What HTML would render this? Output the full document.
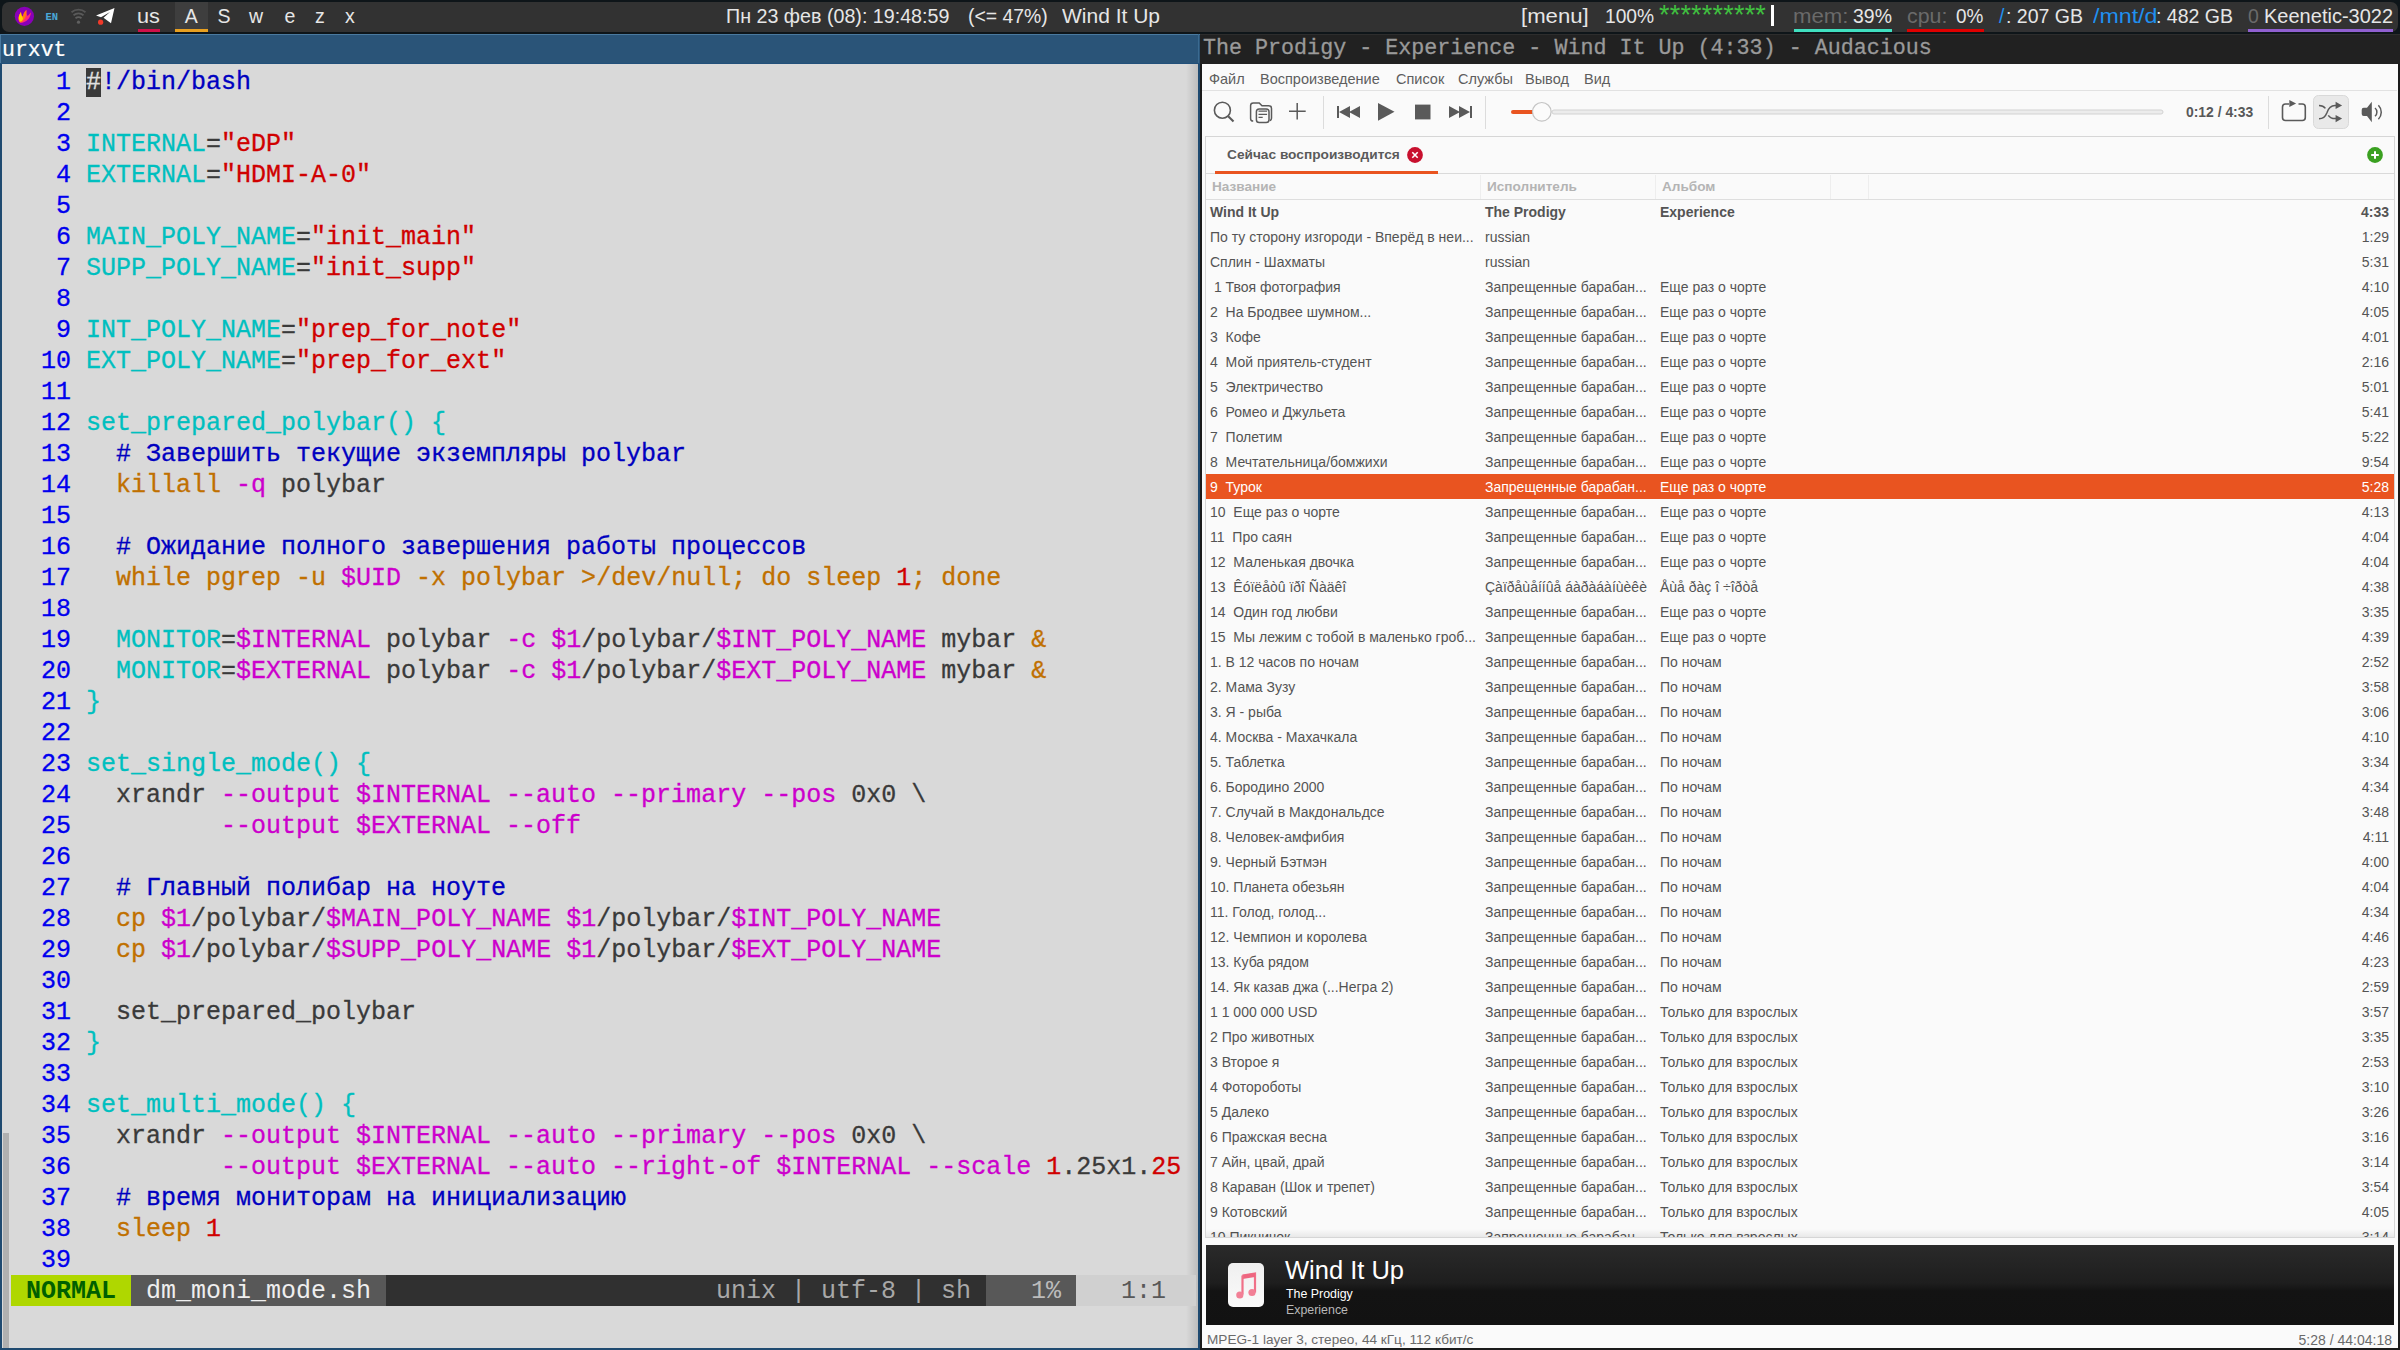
<!DOCTYPE html>
<html><head><meta charset="utf-8">
<style>
*{margin:0;padding:0;box-sizing:border-box}
html,body{width:2400px;height:1350px;overflow:hidden;background:#0e1519;font-family:"Liberation Sans",sans-serif}
.a{position:absolute}
.t{position:absolute;white-space:pre;line-height:1}
.mono{font-family:"Liberation Mono",monospace}
#bar{left:2px;top:2px;width:2396px;height:30px;background:#323232;border-radius:7px}
.bt{position:absolute;white-space:pre;font-size:19.5px;color:#e6e6e6;top:3.5px;line-height:24px}
#term{left:0;top:34px;width:1200px;height:1316px;background:#2a5478}
#termc{left:2px;top:64px;width:1196px;height:1284px;background:#d9d9d9}
#code{position:absolute;left:11px;top:67px;font-family:"Liberation Mono",monospace;font-size:25px;line-height:31px;white-space:pre;color:#3a3a3a;-webkit-text-stroke:0.3px currentColor}
.n{color:#0000ee}.c{color:#0000c0}.v{color:#00bfbf}.s{color:#d00000}.k{color:#c07000}.m{color:#cc00cc}
#aud{left:1200px;top:34px;width:1200px;height:1316px;background:#1a1a1a}
#audt{left:1200px;top:34px;width:1200px;height:30px;background:#212121;border-top:1px solid #2d2d2d}
#audc{left:1202px;top:64px;width:1196px;height:1284px;background:#fafafa}
.row{position:absolute;left:0;width:1188px;height:25px;font-size:14px;line-height:27px;white-space:pre}
.row span{position:absolute;top:0}
.row .dur{right:5px}
</style></head><body>
<div class="a" id="bar"></div>
<div class="a" id="term"></div>
<div class="a" id="termc"></div>
<div class="a" style="left:0px;top:34px;width:1200px;height:1px;background:#4a7aa0;"></div>
<div class="a" style="left:0px;top:34px;width:1px;height:29px;background:#4a7aa0;"></div>
<div class="a" style="left:1198px;top:34px;width:1px;height:29px;background:#3a6a90;"></div>
<div class="a" style="left:0px;top:63px;width:1200px;height:1px;background:#22507a;"></div>
<div class="a" style="left:0px;top:64px;width:2px;height:1286px;background:#1f4a70;"></div>
<div class="a" style="left:1198px;top:64px;width:2px;height:1286px;background:#1f4a70;"></div>
<div class="a" style="left:0px;top:1348px;width:1200px;height:2px;background:#1f4a70;"></div>
<div class="a" style="left:1186px;top:64px;width:12px;height:1284px;background:linear-gradient(to right,rgba(0,0,0,0),rgba(0,0,0,0.13))"></div>
<div class="t mono" style="left:2px;top:38px;font-size:21.5px;line-height:24px;color:#fff;-webkit-text-stroke:0.2px currentColor">urxvt</div>
<div id="code"><span class="n">   1</span> <span style="background:#3a3a3a;color:#e0e0e0">#</span><span class="c">!/bin/bash</span>
<span class="n">   2</span> 
<span class="n">   3</span> <span class="v">INTERNAL</span>=<span class="s">&quot;eDP&quot;</span>
<span class="n">   4</span> <span class="v">EXTERNAL</span>=<span class="s">&quot;HDMI-A-0&quot;</span>
<span class="n">   5</span> 
<span class="n">   6</span> <span class="v">MAIN_POLY_NAME</span>=<span class="s">&quot;init_main&quot;</span>
<span class="n">   7</span> <span class="v">SUPP_POLY_NAME</span>=<span class="s">&quot;init_supp&quot;</span>
<span class="n">   8</span> 
<span class="n">   9</span> <span class="v">INT_POLY_NAME</span>=<span class="s">&quot;prep_for_note&quot;</span>
<span class="n">  10</span> <span class="v">EXT_POLY_NAME</span>=<span class="s">&quot;prep_for_ext&quot;</span>
<span class="n">  11</span> 
<span class="n">  12</span> <span class="v">set_prepared_polybar() {</span>
<span class="n">  13</span>   <span class="c"># Завершить текущие экземпляры polybar</span>
<span class="n">  14</span>   <span class="k">killall</span> <span class="m">-q</span> polybar
<span class="n">  15</span> 
<span class="n">  16</span>   <span class="c"># Ожидание полного завершения работы процессов</span>
<span class="n">  17</span>   <span class="k">while pgrep -u </span><span class="m">$UID</span><span class="k"> -x polybar &gt;/dev/null; do sleep </span><span class="s">1</span><span class="k">; done</span>
<span class="n">  18</span> 
<span class="n">  19</span>   <span class="v">MONITOR</span>=<span class="m">$INTERNAL</span> polybar <span class="m">-c</span> <span class="m">$1</span>/polybar/<span class="m">$INT_POLY_NAME</span> mybar <span class="k">&amp;</span>
<span class="n">  20</span>   <span class="v">MONITOR</span>=<span class="m">$EXTERNAL</span> polybar <span class="m">-c</span> <span class="m">$1</span>/polybar/<span class="m">$EXT_POLY_NAME</span> mybar <span class="k">&amp;</span>
<span class="n">  21</span> <span class="v">}</span>
<span class="n">  22</span> 
<span class="n">  23</span> <span class="v">set_single_mode() {</span>
<span class="n">  24</span>   xrandr <span class="m">--output $INTERNAL --auto --primary --pos</span> 0x0 \
<span class="n">  25</span>          <span class="m">--output $EXTERNAL --off</span>
<span class="n">  26</span> 
<span class="n">  27</span>   <span class="c"># Главный полибар на ноуте</span>
<span class="n">  28</span>   <span class="k">cp</span> <span class="m">$1</span>/polybar/<span class="m">$MAIN_POLY_NAME</span> <span class="m">$1</span>/polybar/<span class="m">$INT_POLY_NAME</span>
<span class="n">  29</span>   <span class="k">cp</span> <span class="m">$1</span>/polybar/<span class="m">$SUPP_POLY_NAME</span> <span class="m">$1</span>/polybar/<span class="m">$EXT_POLY_NAME</span>
<span class="n">  30</span> 
<span class="n">  31</span>   set_prepared_polybar
<span class="n">  32</span> <span class="v">}</span>
<span class="n">  33</span> 
<span class="n">  34</span> <span class="v">set_multi_mode() {</span>
<span class="n">  35</span>   xrandr <span class="m">--output $INTERNAL --auto --primary --pos</span> 0x0 \
<span class="n">  36</span>          <span class="m">--output $EXTERNAL --auto --right-of $INTERNAL --scale</span> <span class="s">1</span>.25x1.<span class="s">25</span>
<span class="n">  37</span>   <span class="c"># время мониторам на инициализацию</span>
<span class="n">  38</span>   <span class="k">sleep</span> <span class="s">1</span>
<span class="n">  39</span> </div>
<div class="a" id="aud"></div>
<div class="a" id="audt"></div>
<div class="t mono" style="left:1203px;top:37px;font-size:21.7px;line-height:24px;color:#9a9a9a;-webkit-text-stroke:0.3px currentColor">The Prodigy - Experience - Wind It Up (4:33) - Audacious</div>
<div class="a" id="audc"></div>
<div class="a" style="left:175px;top:2px;width:33px;height:30px;background:#3e3e3e;"></div>
<div class="a" style="left:138px;top:29px;width:22px;height:3px;background:#d0104a;"></div>
<div class="a" style="left:175px;top:29px;width:33px;height:3px;background:#e8a020;"></div>
<div class="bt" style="left:137.29px;color:#e6e6e6;transform:scaleX(1.1105);transform-origin:0 0">us</div>
<div class="bt" style="left:184.80px;color:#e6e6e6;transform:scaleX(1.0000);transform-origin:0 0">A</div>
<div class="bt" style="left:217.60px;color:#e6e6e6;transform:scaleX(1.0000);transform-origin:0 0">S</div>
<div class="bt" style="left:249.00px;color:#e6e6e6;transform:scaleX(1.0000);transform-origin:0 0">w</div>
<div class="bt" style="left:284.50px;color:#e6e6e6;transform:scaleX(1.0000);transform-origin:0 0">e</div>
<div class="bt" style="left:315.00px;color:#e6e6e6;transform:scaleX(1.0000);transform-origin:0 0">z</div>
<div class="bt" style="left:345.00px;color:#e6e6e6;transform:scaleX(1.0000);transform-origin:0 0">x</div>
<div class="bt" style="left:725.99px;color:#e6e6e6;transform:scaleX(1.0091);transform-origin:0 0">Пн 23 фев (08): 19:48:59</div>
<div class="bt" style="left:968.21px;color:#e6e6e6;transform:scaleX(0.9936);transform-origin:0 0">(&lt;= 47%)</div>
<div class="bt" style="left:1062.40px;color:#e6e6e6;transform:scaleX(1.0769);transform-origin:0 0">Wind It Up</div>
<div class="bt" style="left:1520.56px;color:#e6e6e6;transform:scaleX(1.1362);transform-origin:0 0">[menu]</div>
<div class="bt" style="left:1604.71px;color:#e6e6e6;transform:scaleX(0.9854);transform-origin:0 0">100%</div>
<div class="bt" style="left:1793.46px;color:#6a6a6a;transform:scaleX(1.1391);transform-origin:0 0">mem:</div>
<div class="bt" style="left:1852.50px;color:#e6e6e6;transform:scaleX(0.9974);transform-origin:0 0">39%</div>
<div class="bt" style="left:1906.71px;color:#6a6a6a;transform:scaleX(1.0941);transform-origin:0 0">cpu:</div>
<div class="bt" style="left:1955.83px;color:#e6e6e6;transform:scaleX(0.9704);transform-origin:0 0">0%</div>
<div class="bt" style="left:1999.00px;color:#2090f0;transform:scaleX(1.0000);transform-origin:0 0">/</div>
<div class="bt" style="left:2006.00px;color:#e6e6e6;transform:scaleX(1.0000);transform-origin:0 0">: 207 GB</div>
<div class="bt" style="left:2093.00px;color:#2090f0;transform:scaleX(1.1887);transform-origin:0 0">/mnt/d</div>
<div class="bt" style="left:2156.00px;color:#e6e6e6;transform:scaleX(1.0000);transform-origin:0 0">: 482 GB</div>
<div class="bt" style="left:2248.00px;color:#6a6a6a;transform:scaleX(1.0000);transform-origin:0 0">0</div>
<div class="bt" style="left:2263.67px;color:#e6e6e6;transform:scaleX(1.0266);transform-origin:0 0">Keenetic-3022</div>
<div class="bt" style="left:1659px;color:#40c040;font-size:27px;letter-spacing:0.2px;top:3px">**********</div>
<div class="a" style="left:1771px;top:5px;width:3px;height:21px;background:#ffffff;"></div>
<div class="a" style="left:1794px;top:29px;width:98px;height:3px;background:#40e0c0;"></div>
<div class="a" style="left:1907px;top:29px;width:77px;height:3px;background:#e00000;"></div>
<div class="a" style="left:2248px;top:29px;width:145px;height:3px;background:#9060d0;"></div>
<svg class="a" style="left:0;top:0" width="130" height="34" viewBox="0 0 130 34"><circle cx="24.4" cy="16.3" r="9.6" fill="#8a00b8"/><path d="M19.5 22 C17.5 18 19 15 21 12 C21 15 22 16 23 16.5 C23 14 24.5 11.5 26.5 10 C26 13 27 15 27.5 16 C28.5 15 30 13.5 31 12.5 C30.5 17 28 21 23 22.5 C21.5 23 20.5 23 19.5 22 Z" fill="#ff2a7a"/><path d="M19.5 22 C17.5 18 19 15 21 12 C21 15 22 16 23 16.5 C23 14 24.5 11.5 26.5 10 C26.5 14 26 18 23 21 C21.5 22.5 20.5 22.8 19.5 22 Z" fill="#ff7a10"/><path d="M20 21.5 C18 18 19 15 21 12 C21 15 22 17 23 18 C23 20 21.5 21.5 20 21.5 Z" fill="#ffd000"/><text x="45.5" y="19.5" font-family="Liberation Mono" font-weight="bold" font-size="10.5" fill="#4aa8d8">EN</text><path d="M71.5 12.2 A11 11 0 0 1 85.5 12.2" fill="none" stroke="#555" stroke-width="1.8"/><path d="M73.5 15.2 A8 8 0 0 1 83.5 15.2" fill="none" stroke="#5a5a5a" stroke-width="1.8"/><path d="M75.5 18.3 A5 5 0 0 1 81.5 18.3" fill="none" stroke="#5e5e5e" stroke-width="1.8"/><circle cx="78.5" cy="22.2" r="1.6" fill="#606060"/><path d="M96 15.5 L114.5 8 L111 23.2 L103.5 17.8 L110 12 L101 17.2 Z" fill="#ffffff"/><circle cx="100.6" cy="22.2" r="2.6" fill="#f03a2a"/></svg>
<div class="a mono" style="left:11px;top:1275px;width:120px;height:31px;background:#afd700;color:#005f00;font-size:25px;line-height:33px;white-space:pre;font-weight:bold;"> NORMAL </div>
<div class="a mono" style="left:131px;top:1275px;width:255px;height:31px;background:#585858;color:#eeeeee;font-size:25px;line-height:33px;white-space:pre;"> dm_moni_mode.sh </div>
<div class="a mono" style="left:386px;top:1275px;width:600px;height:31px;background:#303030;color:#a8a8a8;font-size:25px;line-height:33px;white-space:pre;">                      unix | utf-8 | sh </div>
<div class="a mono" style="left:986px;top:1275px;width:90px;height:31px;background:#585858;color:#bcbcbc;font-size:25px;line-height:33px;white-space:pre;">   1% </div>
<div class="a mono" style="left:1076px;top:1275px;width:120px;height:31px;background:#d0d0d0;color:#585858;font-size:25px;line-height:33px;white-space:pre;">   1:1  </div>
<div class="a" style="left:3px;top:1133px;width:6px;height:215px;background:#b0b0b0;"></div>
<div class="a" style="left:1202px;top:90px;width:1195px;height:1px;background:#e2e2e2;"></div>
<div class="t" style="left:1209px;top:72px;font-size:14.5px;color:#5e5e5e;font-weight:normal;">Файл</div>
<div class="t" style="left:1260px;top:72px;font-size:14.5px;color:#5e5e5e;font-weight:normal;">Воспроизведение</div>
<div class="t" style="left:1396px;top:72px;font-size:14.5px;color:#5e5e5e;font-weight:normal;">Список</div>
<div class="t" style="left:1458px;top:72px;font-size:14.5px;color:#5e5e5e;font-weight:normal;">Службы</div>
<div class="t" style="left:1525px;top:72px;font-size:14.5px;color:#5e5e5e;font-weight:normal;">Вывод</div>
<div class="t" style="left:1584px;top:72px;font-size:14.5px;color:#5e5e5e;font-weight:normal;">Вид</div>
<div class="a" style="left:1323px;top:96px;width:1px;height:33px;background:#dcdcdc;"></div>
<div class="a" style="left:1485px;top:96px;width:1px;height:33px;background:#dcdcdc;"></div>
<div class="a" style="left:2268px;top:96px;width:1px;height:33px;background:#dcdcdc;"></div>
<svg class="a" style="left:1202px;top:91px" width="1195" height="45" viewBox="1202 91 1195 45"><circle cx="1222.4" cy="110.2" r="8.0" fill="none" stroke="#5a5a5a" stroke-width="1.6"/><line x1="1228.2" y1="116.2" x2="1233.5" y2="121.5" stroke="#5a5a5a" stroke-width="2.1"/><path d="M1253 121H1253.2A2.6 2.6 0 0 1 1250.6 118.4V105.6A2.7 2.7 0 0 1 1253.3 102.9H1259.2L1262 105.7H1268.8A2.7 2.7 0 0 1 1271.5 108.4V118.2A2.5 2.5 0 0 1 1269.8 120.6" fill="none" stroke="#5a5a5a" stroke-width="1.5"/><rect x="1256.4" y="109" width="12.6" height="13.6" rx="2.8" fill="#fafafa" stroke="#5a5a5a" stroke-width="1.5"/><path d="M1258.5 111.2h8.6M1258.5 114.3h8.6M1258.5 117.3h4.2" stroke="#5a5a5a" stroke-width="1.3"/><path d="M1297.2 103v16.6M1289 111.2h16.7" stroke="#5a5a5a" stroke-width="1.5"/><path d="M1337 106h2v12h-2z M1339 112l11-6v12z M1349 112l11-6v12z" fill="#5a5a5a"/><path d="M1378 103l16.5 8.8l-16.5 9z" fill="#5a5a5a"/><rect x="1415" y="104.6" width="15.5" height="14.8" fill="#5a5a5a"/><path d="M1449 106l11 6l-11 6z M1459 106l11 6l-11 6z M1470 106h2v12h-2z" fill="#5a5a5a"/><rect x="1552" y="110" width="611" height="4" rx="2" fill="#ececec" stroke="#d2d2d2" stroke-width="1"/><rect x="1511" y="110" width="24" height="4" rx="2" fill="#e95420"/><circle cx="1541.8" cy="111.8" r="9.3" fill="#fbfbfb" stroke="#c4c4c4" stroke-width="1.2"/><path d="M2298.5 104h3.8a3 3 0 0 1 3 3v10.5a3 3 0 0 1 -3 3h-16.8a3 3 0 0 1 -3 -3v-10.5a3 3 0 0 1 3 -3h3.5" fill="none" stroke="#5a5a5a" stroke-width="1.6"/><path d="M2289.3 100.1L2296.1 103.6L2289.3 107.1Z" fill="#5a5a5a"/><rect x="2313.5" y="95.5" width="35" height="33" rx="5" fill="#e9e9e9" stroke="#d9d9d9" stroke-width="1"/><path d="M2319 105.6C2322 105.6 2324 106.6 2325.4 108.4 M2319 118.7C2323 118.7 2325.3 117 2326.8 113 C2328.3 108.6 2330.8 105.6 2335 105.6H2337 M2328.3 115.3C2329.8 117.5 2332 118.6 2335 118.6H2337" fill="none" stroke="#5a5a5a" stroke-width="1.5"/><path d="M2335.6 101.8L2342.1 105.4L2335.6 108.9Z M2335.6 115.1L2342.1 118.6L2335.6 122.2Z" fill="#5a5a5a"/><path d="M2363.7 107.8H2367L2371.8 101.8V122.2L2367 116.1H2363.7A2 2 0 0 1 2361.7 114.1V109.8A2 2 0 0 1 2363.7 107.8Z" fill="#5a5a5a"/><path d="M2375 108a5.5 5.5 0 0 1 0 8.3 M2378.4 105.2a10 10 0 0 1 0 14" fill="none" stroke="#5a5a5a" stroke-width="1.5"/></svg>
<div class="t" style="left:2186px;top:106px;font-size:13.9px;color:#585858;font-weight:bold;">0:12 / 4:33</div>
<div class="a" style="left:1205px;top:136px;width:1190px;height:1102px;border:1px solid #d6d6d6;background:#fafafa"></div>
<div class="a" style="left:1206px;top:173px;width:1188px;height:1px;background:#dadada;"></div>
<div class="a" style="left:1215px;top:171px;width:223px;height:3px;background:#e95420;"></div>
<div class="t" style="left:1227px;top:148px;font-size:13.7px;color:#5a5a5a;font-weight:bold;">Сейчас воспроизводится</div>
<svg class="a" style="left:1407px;top:147px" width="16" height="16"><circle cx="8" cy="8" r="7.9" fill="#c8102e"/><path d="M5.3 5.3l5.4 5.4M10.7 5.3l-5.4 5.4" stroke="#fff" stroke-width="1.6"/></svg>
<svg class="a" style="left:2367px;top:147px" width="16" height="16"><circle cx="8" cy="8" r="7.9" fill="#3aa020"/><path d="M8 4.2v7.6M4.2 8h7.6" stroke="#fff" stroke-width="2"/></svg>
<div class="a" style="left:1206px;top:199px;width:1188px;height:1px;background:#dedede;"></div>
<div class="a" style="left:1480px;top:175px;width:1px;height:24px;background:#eeeeee;"></div>
<div class="a" style="left:1655px;top:175px;width:1px;height:24px;background:#eeeeee;"></div>
<div class="a" style="left:1830px;top:175px;width:1px;height:24px;background:#eeeeee;"></div>
<div class="a" style="left:1868px;top:175px;width:1px;height:24px;background:#eeeeee;"></div>
<div class="t" style="left:1212px;top:180px;font-size:13.6px;color:#b4b4b4;font-weight:bold;">Название</div>
<div class="t" style="left:1487px;top:180px;font-size:13.6px;color:#b4b4b4;font-weight:bold;">Исполнитель</div>
<div class="t" style="left:1662px;top:180px;font-size:13.6px;color:#b4b4b4;font-weight:bold;">Альбом</div>
<div class="a" style="left:1206px;top:199px;width:1188px;height:1038px;overflow:hidden"><div class="row" style="top:0px;color:#545454;font-weight:bold;"><span style="left:4px">Wind It Up</span><span style="left:279px">The Prodigy</span><span style="left:454px">Experience</span><span class="dur">4:33</span></div><div class="row" style="top:25px;color:#545454;"><span style="left:4px">По ту сторону изгороди - Вперёд в неи...</span><span style="left:279px">russian</span><span style="left:454px"></span><span class="dur">1:29</span></div><div class="row" style="top:50px;color:#545454;"><span style="left:4px">Сплин - Шахматы</span><span style="left:279px">russian</span><span style="left:454px"></span><span class="dur">5:31</span></div><div class="row" style="top:75px;color:#545454;"><span style="left:4px"> 1 Твоя фотография</span><span style="left:279px">Запрещенные барабан...</span><span style="left:454px">Еще раз о чорте</span><span class="dur">4:10</span></div><div class="row" style="top:100px;color:#545454;"><span style="left:4px">2  На Бродвее шумном...</span><span style="left:279px">Запрещенные барабан...</span><span style="left:454px">Еще раз о чорте</span><span class="dur">4:05</span></div><div class="row" style="top:125px;color:#545454;"><span style="left:4px">3  Кофе</span><span style="left:279px">Запрещенные барабан...</span><span style="left:454px">Еще раз о чорте</span><span class="dur">4:01</span></div><div class="row" style="top:150px;color:#545454;"><span style="left:4px">4  Мой приятель-студент</span><span style="left:279px">Запрещенные барабан...</span><span style="left:454px">Еще раз о чорте</span><span class="dur">2:16</span></div><div class="row" style="top:175px;color:#545454;"><span style="left:4px">5  Электричество</span><span style="left:279px">Запрещенные барабан...</span><span style="left:454px">Еще раз о чорте</span><span class="dur">5:01</span></div><div class="row" style="top:200px;color:#545454;"><span style="left:4px">6  Ромео и Джульета</span><span style="left:279px">Запрещенные барабан...</span><span style="left:454px">Еще раз о чорте</span><span class="dur">5:41</span></div><div class="row" style="top:225px;color:#545454;"><span style="left:4px">7  Полетим</span><span style="left:279px">Запрещенные барабан...</span><span style="left:454px">Еще раз о чорте</span><span class="dur">5:22</span></div><div class="row" style="top:250px;color:#545454;"><span style="left:4px">8  Мечтательница/бомжихи</span><span style="left:279px">Запрещенные барабан...</span><span style="left:454px">Еще раз о чорте</span><span class="dur">9:54</span></div><div class="row" style="top:275px;color:#ffffff;background:#e95420;"><span style="left:4px">9  Турок</span><span style="left:279px">Запрещенные барабан...</span><span style="left:454px">Еще раз о чорте</span><span class="dur">5:28</span></div><div class="row" style="top:300px;color:#545454;"><span style="left:4px">10  Еще раз о чорте</span><span style="left:279px">Запрещенные барабан...</span><span style="left:454px">Еще раз о чорте</span><span class="dur">4:13</span></div><div class="row" style="top:325px;color:#545454;"><span style="left:4px">11  Про саян</span><span style="left:279px">Запрещенные барабан...</span><span style="left:454px">Еще раз о чорте</span><span class="dur">4:04</span></div><div class="row" style="top:350px;color:#545454;"><span style="left:4px">12  Маленькая двочка</span><span style="left:279px">Запрещенные барабан...</span><span style="left:454px">Еще раз о чорте</span><span class="dur">4:04</span></div><div class="row" style="top:375px;color:#545454;"><span style="left:4px">13  Êóïëåòû ïðî Ñàäêî</span><span style="left:279px">Çàïðåùåííûå áàðàáàíùèêè</span><span style="left:454px">Åùå ðàç î ÷îðòå</span><span class="dur">4:38</span></div><div class="row" style="top:400px;color:#545454;"><span style="left:4px">14  Один год любви</span><span style="left:279px">Запрещенные барабан...</span><span style="left:454px">Еще раз о чорте</span><span class="dur">3:35</span></div><div class="row" style="top:425px;color:#545454;"><span style="left:4px">15  Мы лежим с тобой в маленько гроб...</span><span style="left:279px">Запрещенные барабан...</span><span style="left:454px">Еще раз о чорте</span><span class="dur">4:39</span></div><div class="row" style="top:450px;color:#545454;"><span style="left:4px">1. В 12 часов по ночам</span><span style="left:279px">Запрещенные барабан...</span><span style="left:454px">По ночам</span><span class="dur">2:52</span></div><div class="row" style="top:475px;color:#545454;"><span style="left:4px">2. Мама Зузу</span><span style="left:279px">Запрещенные барабан...</span><span style="left:454px">По ночам</span><span class="dur">3:58</span></div><div class="row" style="top:500px;color:#545454;"><span style="left:4px">3. Я - рыба</span><span style="left:279px">Запрещенные барабан...</span><span style="left:454px">По ночам</span><span class="dur">3:06</span></div><div class="row" style="top:525px;color:#545454;"><span style="left:4px">4. Москва - Махачкала</span><span style="left:279px">Запрещенные барабан...</span><span style="left:454px">По ночам</span><span class="dur">4:10</span></div><div class="row" style="top:550px;color:#545454;"><span style="left:4px">5. Таблетка</span><span style="left:279px">Запрещенные барабан...</span><span style="left:454px">По ночам</span><span class="dur">3:34</span></div><div class="row" style="top:575px;color:#545454;"><span style="left:4px">6. Бородино 2000</span><span style="left:279px">Запрещенные барабан...</span><span style="left:454px">По ночам</span><span class="dur">4:34</span></div><div class="row" style="top:600px;color:#545454;"><span style="left:4px">7. Случай в Макдональдсе</span><span style="left:279px">Запрещенные барабан...</span><span style="left:454px">По ночам</span><span class="dur">3:48</span></div><div class="row" style="top:625px;color:#545454;"><span style="left:4px">8. Человек-амфибия</span><span style="left:279px">Запрещенные барабан...</span><span style="left:454px">По ночам</span><span class="dur">4:11</span></div><div class="row" style="top:650px;color:#545454;"><span style="left:4px">9. Черный Бэтмэн</span><span style="left:279px">Запрещенные барабан...</span><span style="left:454px">По ночам</span><span class="dur">4:00</span></div><div class="row" style="top:675px;color:#545454;"><span style="left:4px">10. Планета обезьян</span><span style="left:279px">Запрещенные барабан...</span><span style="left:454px">По ночам</span><span class="dur">4:04</span></div><div class="row" style="top:700px;color:#545454;"><span style="left:4px">11. Голод, голод...</span><span style="left:279px">Запрещенные барабан...</span><span style="left:454px">По ночам</span><span class="dur">4:34</span></div><div class="row" style="top:725px;color:#545454;"><span style="left:4px">12. Чемпион и королева</span><span style="left:279px">Запрещенные барабан...</span><span style="left:454px">По ночам</span><span class="dur">4:46</span></div><div class="row" style="top:750px;color:#545454;"><span style="left:4px">13. Куба рядом</span><span style="left:279px">Запрещенные барабан...</span><span style="left:454px">По ночам</span><span class="dur">4:23</span></div><div class="row" style="top:775px;color:#545454;"><span style="left:4px">14. Як казав джа (...Негра 2)</span><span style="left:279px">Запрещенные барабан...</span><span style="left:454px">По ночам</span><span class="dur">2:59</span></div><div class="row" style="top:800px;color:#545454;"><span style="left:4px">1 1 000 000 USD</span><span style="left:279px">Запрещенные барабан...</span><span style="left:454px">Только для взрослых</span><span class="dur">3:57</span></div><div class="row" style="top:825px;color:#545454;"><span style="left:4px">2 Про животных</span><span style="left:279px">Запрещенные барабан...</span><span style="left:454px">Только для взрослых</span><span class="dur">3:35</span></div><div class="row" style="top:850px;color:#545454;"><span style="left:4px">3 Второе я</span><span style="left:279px">Запрещенные барабан...</span><span style="left:454px">Только для взрослых</span><span class="dur">2:53</span></div><div class="row" style="top:875px;color:#545454;"><span style="left:4px">4 Фотороботы</span><span style="left:279px">Запрещенные барабан...</span><span style="left:454px">Только для взрослых</span><span class="dur">3:10</span></div><div class="row" style="top:900px;color:#545454;"><span style="left:4px">5 Далеко</span><span style="left:279px">Запрещенные барабан...</span><span style="left:454px">Только для взрослых</span><span class="dur">3:26</span></div><div class="row" style="top:925px;color:#545454;"><span style="left:4px">6 Пражская весна</span><span style="left:279px">Запрещенные барабан...</span><span style="left:454px">Только для взрослых</span><span class="dur">3:16</span></div><div class="row" style="top:950px;color:#545454;"><span style="left:4px">7 Айн, цвай, драй</span><span style="left:279px">Запрещенные барабан...</span><span style="left:454px">Только для взрослых</span><span class="dur">3:14</span></div><div class="row" style="top:975px;color:#545454;"><span style="left:4px">8 Караван (Шок и трепет)</span><span style="left:279px">Запрещенные барабан...</span><span style="left:454px">Только для взрослых</span><span class="dur">3:54</span></div><div class="row" style="top:1000px;color:#545454;"><span style="left:4px">9 Котовский</span><span style="left:279px">Запрещенные барабан...</span><span style="left:454px">Только для взрослых</span><span class="dur">4:05</span></div><div class="row" style="top:1025px;color:#545454;"><span style="left:4px">10 Пикничок</span><span style="left:279px">Запрещенные барабан...</span><span style="left:454px">Только для взрослых</span><span class="dur">3:14</span></div></div>
<div class="a" style="left:1206px;top:1229px;width:1188px;height:8px;background:linear-gradient(rgba(0,0,0,0),rgba(0,0,0,0.07))"></div>
<div class="a" style="left:1206px;top:1245px;width:1188px;height:80px;background:linear-gradient(#2a2a2a 0px,#1e1e1e 38px,#131313 46px,#121212 80px)"></div>
<div class="a" style="left:1228px;top:1263px;width:36px;height:44px;border-radius:5px;background:linear-gradient(#efefef,#fafafa)"></div>
<svg class="a" style="left:1228px;top:1263px" width="36" height="44" viewBox="0 0 36 44"><path d="M14.5 12.5l12.5 -2v19" fill="none" stroke="#f07088" stroke-width="2.2"/><path d="M14.5 12l12.5 -2v4l-12.5 2z" fill="#ee6680"/><path d="M14.5 12.5v19" stroke="#f07088" stroke-width="2.2"/><circle cx="11.8" cy="32" r="3.6" fill="#f28096"/><circle cx="24" cy="29.5" r="3.6" fill="#f28096"/></svg>
<div class="t" style="left:1285px;top:1258px;font-size:25.5px;color:#ffffff;font-weight:normal;">Wind It Up</div>
<div class="t" style="left:1286px;top:1288px;font-size:12.4px;color:#ffffff;font-weight:normal;">The Prodigy</div>
<div class="t" style="left:1286px;top:1304px;font-size:12.4px;color:#b8b8b8;font-weight:normal;">Experience</div>
<div class="t" style="left:1207px;top:1333px;font-size:13.6px;color:#6a6a6a;font-weight:normal;">MPEG-1 layer 3, стерео, 44 кГц, 112 кбит/с</div>
<div class="t" style="right:8px;top:1333px;font-size:14px;color:#6a6a6a">5:28 / 44:04:18</div>
</body></html>
